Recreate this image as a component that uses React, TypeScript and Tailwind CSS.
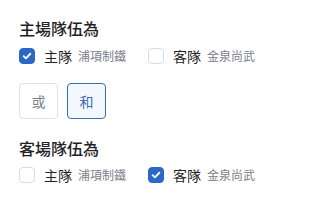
import { useState } from 'react'

const font = { fontFamily: '"Noto Sans CJK TC", "Noto Sans", sans-serif' }

function Check({ checked, onClick }: { checked: boolean; onClick: () => void }) {
  return (
    <button
      onClick={onClick}
      className={`w-4 h-4 rounded-[4px] flex items-center justify-center shrink-0 ${
        checked ? 'bg-[#2a67c6] border border-[#2a67c6]' : 'bg-white border border-[#d9dce1]'
      }`}
    >
      {checked && (
        <svg viewBox="0 0 16 16" className="w-3 h-3" fill="none" stroke="white" strokeWidth={2.4} strokeLinecap="round" strokeLinejoin="round">
          <path d="M3.5 8.3l3 2.9 6-6.2" />
        </svg>
      )}
    </button>
  )
}

function TeamRow({ value, onChange }: { value: 'home' | 'away'; onChange: (v: 'home' | 'away') => void }) {
  return (
    <div className="flex items-center h-6">
      <div className="flex items-center w-[129px]">
        <Check checked={value === 'home'} onClick={() => onChange('home')} />
        <span className="ml-[9px] text-[14px] text-[#1f2328]">主隊</span>
        <span className="ml-[6px] text-[12px] text-[#7a8089]">浦項制鐵</span>
      </div>
      <div className="flex items-center">
        <Check checked={value === 'away'} onClick={() => onChange('away')} />
        <span className="ml-[9px] text-[14px] text-[#1f2328]">客隊</span>
        <span className="ml-[6px] text-[12px] text-[#7a8089]">金泉尚武</span>
      </div>
    </div>
  )
}

export default function App() {
  const [home, setHome] = useState<'home' | 'away'>('home')
  const [away, setAway] = useState<'home' | 'away'>('away')
  const [mode, setMode] = useState<'or' | 'and'>('and')

  return (
    <div className="w-[316px] h-[203px] bg-white pl-[19px] pt-[16px]" style={font}>
      <div className="text-[16px] leading-6 font-medium text-[#1f2328]">主場隊伍為</div>
      <div className="mt-[4px]">
        <TeamRow value={home} onChange={setHome} />
      </div>
      <div className="flex gap-[9px] mt-[15px]">
        <button
          onClick={() => setMode('or')}
          className={`w-[39px] h-[36px] rounded-[4px] text-[14px] ${
            mode === 'or' ? 'border border-[#3a6db0] bg-[#f3f8fe] text-[#3a6db0]' : 'border border-[#dfe2e6] bg-white text-[#7a8089]'
          }`}
        >
          或
        </button>
        <button
          onClick={() => setMode('and')}
          className={`w-[39px] h-[36px] rounded-[4px] text-[14px] ${
            mode === 'and' ? 'border border-[#3a6db0] bg-[#f3f8fe] text-[#3a6db0]' : 'border border-[#dfe2e6] bg-white text-[#7a8089]'
          }`}
        >
          和
        </button>
      </div>
      <div className="mt-[17px] text-[16px] leading-6 font-medium text-[#1f2328]">客場隊伍為</div>
      <div className="mt-[3px]">
        <TeamRow value={away} onChange={setAway} />
      </div>
    </div>
  )
}
